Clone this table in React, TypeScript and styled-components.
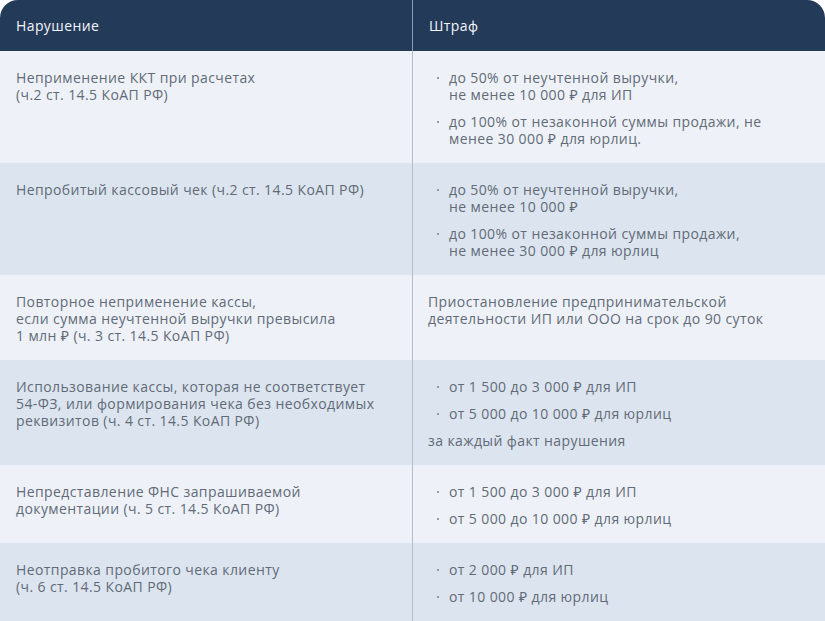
import React from "react";
import styled, { createGlobalStyle } from "styled-components";

const Global = createGlobalStyle`
  html, body { margin: 0; padding: 0; background: #ffffff; }
  body { font-family: "Open Sans", "Noto Sans", sans-serif; }
  * { box-sizing: border-box; }
`;

const Table = styled.div`
  width: 825px;
  display: grid;
  grid-template-columns: 413px 1fr;
  border-radius: 18px 18px 0 0;
  overflow: hidden;
`;

const HeadCell = styled.div<{ $first?: boolean }>`
  height: 51px;
  background: #243a59;
  color: #f4f6f9;
  font-size: 14px;
  font-weight: 500;
  letter-spacing: 0.4px;
  display: flex;
  align-items: center;
  padding-left: 16px;
  border-right: ${(p) => (p.$first ? "1px solid #8a9ab0" : "none")};
`;

const Cell = styled.div<{ $alt?: boolean; $first?: boolean; $h: number }>`
  height: ${(p) => p.$h}px;
  background: ${(p) => (p.$alt ? "#dce5ef" : "#eef2f8")};
  color: #626a77;
  font-size: 14px;
  line-height: 17px;
  letter-spacing: 0.4px;
  padding: 18px 16px 0 ${(p) => (p.$first ? "16px" : "15px")};
  border-right: ${(p) => (p.$first ? "1px solid #b4bcc7" : "none")};
`;

const Text = styled.div``;

const List = styled.ul`
  list-style: none;
  margin: 0;
  padding: 0;
  display: flex;
  flex-direction: column;
  gap: 10px;
`;

const Item = styled.li`
  position: relative;
  padding-left: 21px;
  &::before {
    content: "";
    position: absolute;
    left: 9px;
    top: 8px;
    width: 2px;
    height: 2px;
    border-radius: 50%;
    background: #7a838f;
  }
`;

const Note = styled.div`
  margin-top: 10px;
`;

type Row = {
  h: number;
  left: React.ReactNode;
  items?: React.ReactNode[];
  text?: React.ReactNode;
  note?: string;
};

const rows: Row[] = [
  {
    h: 112,
    left: (
      <>
        Неприменение ККТ при расчетах
        <br />
        (ч.2 ст. 14.5 КоАП РФ)
      </>
    ),
    items: [
      <>
        до 50% от неучтенной выручки,
        <br />
        не менее 10 000 ₽ для ИП
      </>,
      <>
        до 100% от незаконной суммы продажи, не
        <br />
        менее 30 000 ₽ для юрлиц.
      </>,
    ],
  },
  {
    h: 112,
    left: <>Непробитый кассовый чек (ч.2 ст. 14.5 КоАП РФ)</>,
    items: [
      <>
        до 50% от неучтенной выручки,
        <br />
        не менее 10 000 ₽
      </>,
      <>
        до 100% от незаконной суммы продажи,
        <br />
        не менее 30 000 ₽ для юрлиц
      </>,
    ],
  },
  {
    h: 85,
    left: (
      <>
        Повторное неприменение кассы,
        <br />
        если сумма неучтенной выручки превысила
        <br />1 млн ₽ (ч. 3 ст. 14.5 КоАП РФ)
      </>
    ),
    text: (
      <>
        Приостановление предпринимательской
        <br />
        деятельности ИП или ООО на срок до 90 суток
      </>
    ),
  },
  {
    h: 105,
    left: (
      <>
        Использование кассы, которая не соответствует
        <br />
        54-ФЗ, или формирования чека без необходимых
        <br />
        реквизитов (ч. 4 ст. 14.5 КоАП РФ)
      </>
    ),
    items: ["от 1 500 до 3 000 ₽ для ИП", "от 5 000 до 10 000 ₽ для юрлиц"],
    note: "за каждый факт нарушения",
  },
  {
    h: 78,
    left: (
      <>
        Непредставление ФНС запрашиваемой
        <br />
        документации (ч. 5 ст. 14.5 КоАП РФ)
      </>
    ),
    items: ["от 1 500 до 3 000 ₽ для ИП", "от 5 000 до 10 000 ₽ для юрлиц"],
  },
  {
    h: 78,
    left: (
      <>
        Неотправка пробитого чека клиенту
        <br />
        (ч. 6 ст. 14.5 КоАП РФ)
      </>
    ),
    items: ["от 2 000 ₽ для ИП", "от 10 000 ₽ для юрлиц"],
  },
];

export default function App() {
  return (
    <>
      <Global />
      <Table>
        <HeadCell $first>Нарушение</HeadCell>
        <HeadCell>Штраф</HeadCell>
        {rows.map((r, i) => (
          <React.Fragment key={i}>
            <Cell $first $alt={i % 2 === 1} $h={r.h}>
              <Text>{r.left}</Text>
            </Cell>
            <Cell $alt={i % 2 === 1} $h={r.h}>
              {r.text && <Text>{r.text}</Text>}
              {r.items && (
                <List>
                  {r.items.map((it, j) => (
                    <Item key={j}>{it}</Item>
                  ))}
                </List>
              )}
              {r.note && <Note>{r.note}</Note>}
            </Cell>
          </React.Fragment>
        ))}
      </Table>
    </>
  );
}
